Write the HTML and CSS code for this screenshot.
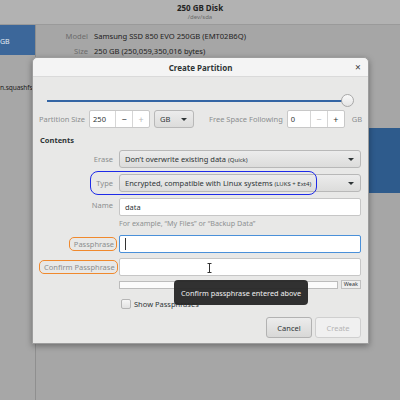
FILE: index.html
```html
<!DOCTYPE html>
<html>
<head>
<meta charset="utf-8">
<link rel="stylesheet" href="styles.css">
</head>
<body>
<div class="app">
  <div class="app-header">
    <div class="app-title">250 GB Disk</div>
    <div class="app-sub">/dev/sda</div>
  </div>
  <div class="app-body">
    <div class="sidebar">
      <div class="side-row selected">GB</div>
      <div class="side-row file">n.squashfs</div>
    </div>
    <div class="main">
      <div class="info-row"><span class="info-key">Model</span><span>Samsung SSD 850 EVO 250GB (EMT02B6Q)</span></div>
      <div class="info-row"><span class="info-key">Size</span><span>250 GB (250,059,350,016 bytes)</span></div>
      <div class="volume-band"></div>
    </div>
  </div>

  <div class="dialog">
    <div class="dlg-title">
      <span>Create Partition</span>
      <span class="close">&#x2715;</span>
    </div>
    <div class="dlg-body">
      <div class="slider">
        <div class="track"></div>
        <div class="knob"></div>
      </div>

      <div class="size-row">
        <span class="dim-label">Partition Size</span>
        <div class="spin spin-a">
          <span class="spin-text">250</span>
          <span class="spin-btn">&#x2212;</span>
          <span class="spin-btn off">+</span>
        </div>
        <div class="combo combo-unit"><span>GB</span><span class="arrow"></span></div>
        <span class="dim-label free">Free Space Following</span>
        <div class="spin spin-b">
          <span class="spin-text">0</span>
          <span class="spin-btn off">&#x2212;</span>
          <span class="spin-btn">+</span>
        </div>
        <span class="unit">GB</span>
      </div>

      <div class="section">Contents</div>

      <div class="form">
        <div class="row">
          <span class="lbl">Erase</span>
          <div class="combo field"><span>Don’t overwrite existing data <small>(Quick)</small></span><span class="arrow"></span></div>
        </div>
        <div class="row">
          <span class="lbl">Type</span>
          <div class="combo field"><span>Encrypted, compatible with Linux systems <small>(LUKS + Ext4)</small></span><span class="arrow"></span></div>
          <span class="mark-blue"></span>
        </div>
        <div class="row">
          <span class="lbl top">Name</span>
          <div class="entry field">data</div>
        </div>
        <div class="hint">For example, “My Files” or “Backup Data”</div>
        <div class="row row-pass">
          <span class="lbl"><span class="mark-orange">Passphrase</span></span>
          <div class="entry field focus"><span class="caret"></span></div>
        </div>
        <div class="row">
          <span class="lbl"><span class="mark-orange">Confirm Passphrase</span></span>
          <div class="entry field">
            <svg class="ibeam" width="5" height="10" viewBox="0 0 5 10"><path d="M0.5 0.5h4M2.5 0.5v9M0.5 9.5h4" stroke="#333" stroke-width="1" fill="none"/></svg>
          </div>
        </div>
        <div class="strength">
          <div class="meter"></div>
          <span class="weak">Weak</span>
        </div>
        <label class="check"><span class="box"></span>Show Passphrases</label>
      </div>

      <div class="buttons">
        <span class="btn">Cancel</span>
        <span class="btn disabled">Create</span>
      </div>
    </div>
    <div class="tooltip">Confirm passphrase entered above</div>
  </div>
</div>
</body>
</html>
```
FILE: styles.css
```css
* { box-sizing: border-box; }
html, body { margin: 0; padding: 0; }
body {
  width: 400px; height: 400px; overflow: hidden;
  font-family: "Noto Sans", "DejaVu Sans", sans-serif;
  font-size: 7.5px;
  background: #a2a2a2;
  color: #2e3436;
  white-space: nowrap;
}
.app { position: relative; width: 400px; height: 400px; }
.app-header {
  height: 25px; background: #b2b2b2;
  border-bottom: 1px solid #9a9a9a;
  display: flex; flex-direction: column; align-items: center;
  padding-top: 3px;
  line-height: 9px;
}
.app-title { font-weight: bold; font-size: 8px; color: #222; }
.app-sub { font-size: 6px; color: #6a6a6a; margin-top: 1px; }
.app-body { display: flex; height: 375px; }
.sidebar { width: 36px; background: #a7a7a7; border-right: 1px solid #8f8f8f; overflow: hidden; }
.side-row { height: 30px; display: flex; align-items: center; color: #222; font-size: 7px; }
.side-row.selected { background: #3c679a; color: #e6ecf2; padding-top: 2px; }
.side-row.file { margin-top: 26px; height: 12px; font-size: 6.6px; letter-spacing: -0.1px; }
.main { flex: 1; position: relative; background: #a6a6a6; padding-top: 3px; }
.info-row { display: flex; gap: 6px; height: 15px; align-items: center; font-size: 7.6px; color: #222; }
.info-key { width: 52px; text-align: right; color: #6c6c6c; }
.volume-band { position: absolute; right: 0; top: 103px; width: 40px; height: 65px; background: #2e5b8c; }

.dialog {
  position: absolute; left: 32px; top: 57px; width: 337px; height: 287px;
  background: #e8e8e7; border: 1px solid #9d9d9d; border-radius: 5px 5px 0 0;
  box-shadow: 0 2px 6px rgba(0,0,0,0.35);
}
.dlg-title {
  height: 19px; background: #f4f4f4; border-bottom: 1px solid #dadada;
  border-radius: 5px 5px 0 0;
  display: flex; align-items: center; justify-content: center; position: relative;
  font-weight: bold; font-size: 8px; color: #2e3436;
}
.close { position: absolute; right: 7px; top: 4px; font-size: 7.5px; font-weight: bold; color: #333; }
.dlg-body { padding: 0 7px 0 6px; }

.slider { position: relative; height: 14px; margin: 17px 7px 0 8px; }
.track { position: absolute; left: 0; right: 4px; top: 6px; height: 2px; background: #3465a4; }
.knob { position: absolute; right: 0; top: 0; width: 13px; height: 13px; border-radius: 50%;
  background: linear-gradient(#fafafa, #e4e4e4); border: 1px solid #a8a8a8; }

.size-row { display: flex; align-items: center; height: 18px; margin-top: 2px; }
.dim-label { color: #8b8e8f; }
.spin { display: flex; height: 18px; background: #fff; border: 1px solid #c8c8c8; border-radius: 2px; align-items: stretch; flex: none; }
.spin-a { margin-left: 4px; width: 61px; }
.spin-b { margin-left: 4px; width: 58px; }
.spin-text { flex: 1; padding-left: 3px; display: flex; align-items: center; }
.spin-btn { width: 17px; border-left: 1px solid #d6d6d6; display: flex; align-items: center; justify-content: center; font-size: 9px; color: #2e3436; }
.spin-btn.off { color: #b8b8b8; }
.combo {
  display: flex; align-items: center; justify-content: space-between;
  height: 18px; background: linear-gradient(#ececec, #dcdcdb);
  border: 1px solid #b8b8b8; border-radius: 3px; padding: 0 6px 0 5px;
}
.combo-unit { width: 40px; margin-left: 4px; flex: none; }
.arrow { width: 0; height: 0; border-left: 3px solid transparent; border-right: 3px solid transparent; border-top: 3px solid #2e3436; }
.free { margin-left: 15px; }
.unit { margin-left: 7px; color: #8b8e8f; }

.section { font-weight: bold; margin: 6px 0 0 1px; height: 12px; line-height: 12px; }
.form { margin-top: 4px; }
.row { display: flex; align-items: center; height: 18px; margin-bottom: 6px; position: relative; }
.lbl { width: 78px; text-align: right; padding-right: 4px; color: #8b8e8f; flex: none; margin-right: 2px; }
.lbl.top { align-self: flex-start; padding-top: 2px; }
.field { flex: 1; height: 18px; }
.combo.field small { font-size: 6px; }
.entry { background: #fff; border: 1px solid #c6c6c6; border-radius: 2px; padding-left: 5px; display: flex; align-items: center; position: relative; }
.entry.focus { border-color: #4a90d9; }
.caret { width: 1px; height: 12px; background: #333; }
.ibeam { position: absolute; left: 87px; top: 4px; }
.hint { margin: -4px 0 0 80px; color: #8e9192; font-size: 7.2px; height: 11px; }
.row-pass { margin-top: 6px; margin-bottom: 5px; }
.mark-orange { display: inline-block; border: 1.5px solid #f0892d; border-radius: 5px; padding: 1px 2px 1px 4px; margin-right: -4px; }
.mark-blue { position: absolute; left: 51px; top: -3px; width: 227px; height: 24px; border: 1.5px solid #1e2be8; border-radius: 8px; }
.strength { display: flex; align-items: center; gap: 3px; margin-left: 80px; height: 9px; margin-top: -2px; }
.meter { flex: 1; height: 8px; background: #fbfbfb; border: 1px solid #bcbcbc; }
.weak { font-size: 5.5px; border: 1px solid #c0c0c0; background: #eee; padding: 0 2px; height: 9px; line-height: 7px; }
.check { display: flex; align-items: center; margin: 9px 0 0 82px; gap: 3px; height: 11px; }
.box { width: 10px; height: 10px; border: 1px solid #b5b5b5; border-radius: 2px; background: linear-gradient(#f6f6f6, #e2e2e2); }

.buttons { display: flex; justify-content: flex-end; gap: 3px; margin-top: 8px; }
.btn { width: 46px; height: 21px; display: flex; align-items: center; justify-content: center;
  background: linear-gradient(#ececec, #d8d8d7); border: 1px solid #b2b2b2; border-radius: 3px; color: #2e3436; }
.btn.disabled { background: #f0f0f0; border-color: #cfcfcf; color: #b5b5b5; }

.tooltip { position: absolute; left: 141px; top: 222px; width: 134px; height: 25px;
  background: rgba(38,38,38,0.95); color: #f0f0f0; border-radius: 4px;
  display: flex; align-items: center; padding-left: 7px; font-size: 7.3px; }
```
